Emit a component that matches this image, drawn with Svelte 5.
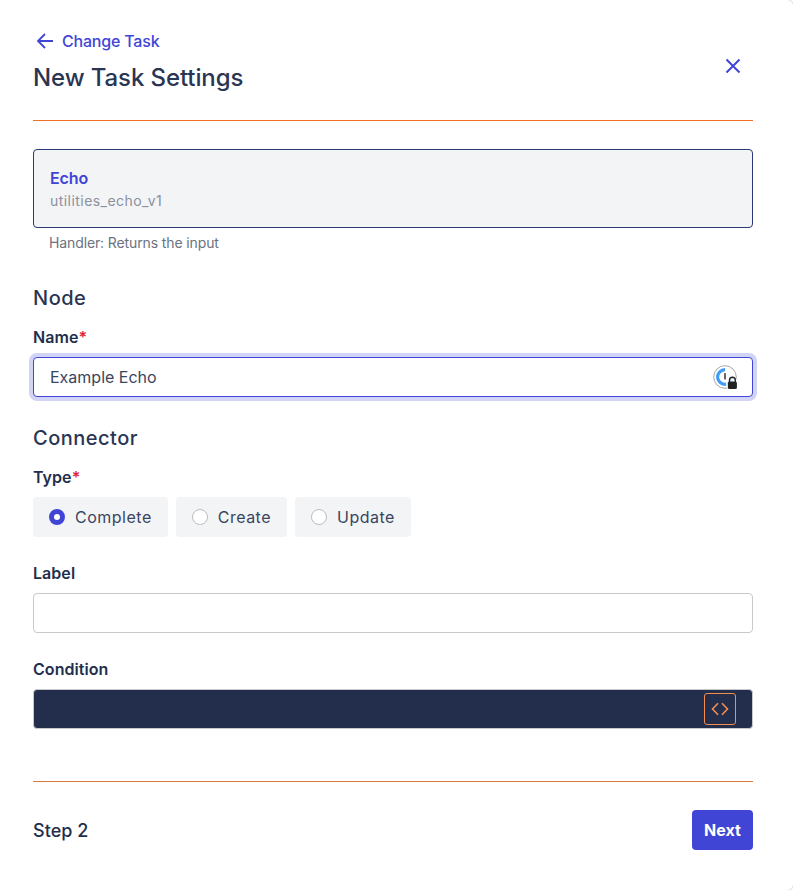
<script>
  let name = $state('Example Echo');
  let label = $state('');
  let type = $state('Complete');
  const types = ['Complete', 'Create', 'Update'];
</script>

<div class="modal">
  <header class="head">
    <div>
      <a class="back" href="#change">
        <svg width="18" height="18" viewBox="0 0 18 18" fill="none" stroke="currentColor" stroke-width="1.8"><path d="M17 9H2M9 2 2 9l7 7"/></svg>
        Change Task
      </a>
      <h1>New Task Settings</h1>
    </div>
    <button class="close" aria-label="Close">
      <svg width="16" height="16" viewBox="0 0 16 16" fill="none" stroke="currentColor" stroke-width="2"><path d="M1.5 1.5l13 13M14.5 1.5l-13 13"/></svg>
    </button>
  </header>

  <section class="task">
    <div class="task-name">Echo</div>
    <div class="task-id">utilities_echo_v1</div>
  </section>
  <p class="hint">Handler: Returns the input</p>

  <h2 class="node">Node</h2>
  <label class="lbl" for="name">Name<span class="req">*</span></label>
  <div class="field">
    <input id="name" class="input focus" bind:value={name} />
    <svg class="pm" width="26" height="26" viewBox="0 0 26 26">
      <circle cx="12" cy="12" r="11.3" fill="#fff" stroke="#a8a8a8" stroke-width="1"/>
      <path d="M12 4.6a7.4 7.4 0 1 0 7.4 7.4" fill="none" stroke="#3f9cf5" stroke-width="3.2"/>
      <rect x="11.1" y="8" width="1.8" height="6.5" rx=".6" fill="#555"/>
      <circle cx="19" cy="19" r="6.2" fill="#fff" opacity=".85"/>
      <path d="M16.5 17v-1.8a2.9 2.9 0 0 1 5.8 0V17" fill="none" stroke="#222" stroke-width="1.4"/>
      <rect x="14.9" y="16.5" width="9" height="7.5" rx="1.5" fill="#222"/>
    </svg>
  </div>

  <h2 class="connector">Connector</h2>
  <div class="lbl">Type<span class="req">*</span></div>
  <div class="radios">
    {#each types as t}
      <label class="radio">
        <input type="radio" name="type" value={t} bind:group={type} />
        <span class="dot"></span>
        {t}
      </label>
    {/each}
  </div>

  <label class="lbl label-l" for="label">Label</label>
  <input id="label" class="input" bind:value={label} />

  <div class="lbl cond-l">Condition</div>
  <div class="cond">
    <button class="code" aria-label="Edit code">
      <svg width="18" height="14" viewBox="0 0 18 14" fill="none" stroke="currentColor" stroke-width="1.6"><path d="M7 1.2 1.5 7 7 12.8M11 1.2 16.5 7 11 12.8"/></svg>
    </button>
  </div>

  <footer class="foot">
    <span class="step">Step 2</span>
    <button class="next">Next</button>
  </footer>
</div>

<style>
  :global(body) { background: #fff; }
  :global(html) { overflow: hidden; }
  .modal {
    box-sizing: border-box;
    width: 793px;
    height: 890px;
    padding: 31px 40px 0 33px;
    background: #fff;
    border-radius: 0 6px 6px 0;
    box-shadow: 0 0 0 1px rgba(0, 0, 0, 0.12);
    font-family: Inter, "Liberation Sans", sans-serif;
    color: #232e4d;
  }
  .head {
    display: flex;
    justify-content: space-between;
    align-items: center;
    height: 90px;
    box-sizing: border-box;
    border-bottom: 1px solid #f2701f;
    padding-bottom: 16px;
  }
  .head > div { align-self: flex-start; }
  .back {
    display: flex;
    align-items: center;
    gap: 8px;
    padding-left: 3px;
    height: 20px;
    color: #4045d6;
    font-size: 16px;
    font-weight: 500;
    letter-spacing: -0.2px;
    text-decoration: none;
  }
  h1 {
    margin: 11px 0 0;
    font-size: 24px;
    line-height: 32px;
    font-weight: 500;
    letter-spacing: -0.1px;
    color: #2a3554;
  }
  .close {
    background: none;
    border: 0;
    padding: 0;
    color: #4045d6;
    display: flex;
    margin-right: 12px;
    margin-top: -4px;
  }
  .task {
    box-sizing: border-box;
    height: 79px;
    margin-top: 28px;
    padding: 18px 16px;
    background: #f3f4f6;
    border: 1px solid #2b3a73;
    border-radius: 4px;
  }
  .task-name {
    color: #4045d6;
    font-size: 16px;
    line-height: 20px;
    font-weight: 600;
    letter-spacing: -0.1px;
  }
  .task-id {
    margin-top: 4px;
    color: #8a90a0;
    font-size: 14px;
    line-height: 18px;
    letter-spacing: 0.45px;
  }
  .hint {
    margin: 6px 0 0;
    padding-left: 16px;
    font-size: 14px;
    line-height: 18px;
    color: #6b7280;
    letter-spacing: -0.12px;
  }
  h2 {
    margin: 0;
    font-size: 20px;
    line-height: 26px;
    font-weight: 500;
    color: #2a3554;
  }
  .node { margin-top: 33px; letter-spacing: 0.5px; }
  .connector { margin-top: 28px; letter-spacing: 0.5px; }
  .lbl {
    display: block;
    font-size: 16px;
    line-height: 20px;
    font-weight: 600;
    letter-spacing: 0.05px;
  }
  .node + .lbl { margin-top: 16px; }
  .connector + .lbl { margin-top: 16px; }
  .req { color: #dc2640; }
  .field { position: relative; margin-top: 10px; }
  .input {
    display: block;
    box-sizing: border-box;
    width: 100%;
    height: 40px;
    padding: 0 16px;
    border: 1px solid #c9c9cc;
    border-radius: 4px;
    background: #fff;
    color: #3a4560;
    font: 400 16px Inter, "Liberation Sans", sans-serif;
    outline: none;
  }
  .focus {
    border-color: #4045d6;
    box-shadow: 0 0 0 4px #d2d4f6;
  }
  .pm { position: absolute; right: 14px; top: 8px; }
  .radios {
    display: flex;
    gap: 8px;
    margin-top: 10px;
  }
  .radio {
    display: flex;
    align-items: center;
    gap: 10px;
    height: 40px;
    padding: 0 16px;
    background: #f3f4f6;
    border-radius: 4px;
    font-size: 16px;
    letter-spacing: 0.5px;
    color: #3a4560;
  }
  .radio input { position: absolute; opacity: 0; width: 0; height: 0; }
  .dot {
    box-sizing: border-box;
    width: 16px;
    height: 16px;
    border: 1px solid #bdbdc0;
    border-radius: 50%;
    background: #fff;
  }
  .radio input:checked + .dot { border: 5px solid #4045d6; }
  .label-l { margin-top: 26px; margin-bottom: 10px; }
  .cond-l { margin-top: 26px; margin-bottom: 10px; }
  .cond {
    box-sizing: border-box;
    display: flex;
    align-items: center;
    justify-content: flex-end;
    height: 40px;
    padding-right: 16px;
    background: #232e4d;
    border: 1px solid #c9c9cc;
    border-radius: 4px;
  }
  .code {
    display: flex;
    align-items: center;
    justify-content: center;
    box-sizing: border-box;
    width: 32px;
    height: 32px;
    padding: 0;
    background: none;
    border: 1px solid #f58d4e;
    border-radius: 3px;
    color: #f58d4e;
  }
  .foot {
    display: flex;
    justify-content: space-between;
    align-items: center;
    margin-top: 52px;
    padding-top: 28px;
    border-top: 1px solid #dc7a3c;
  }
  .step { font-size: 18px; font-weight: 500; letter-spacing: 0.05px; }
  .next {
    width: 61px;
    height: 40px;
    padding: 0;
    border: 0;
    border-radius: 4px;
    background: #4045d6;
    color: #fff;
    font: 700 16px Inter, "Liberation Sans", sans-serif;
  }
</style>
